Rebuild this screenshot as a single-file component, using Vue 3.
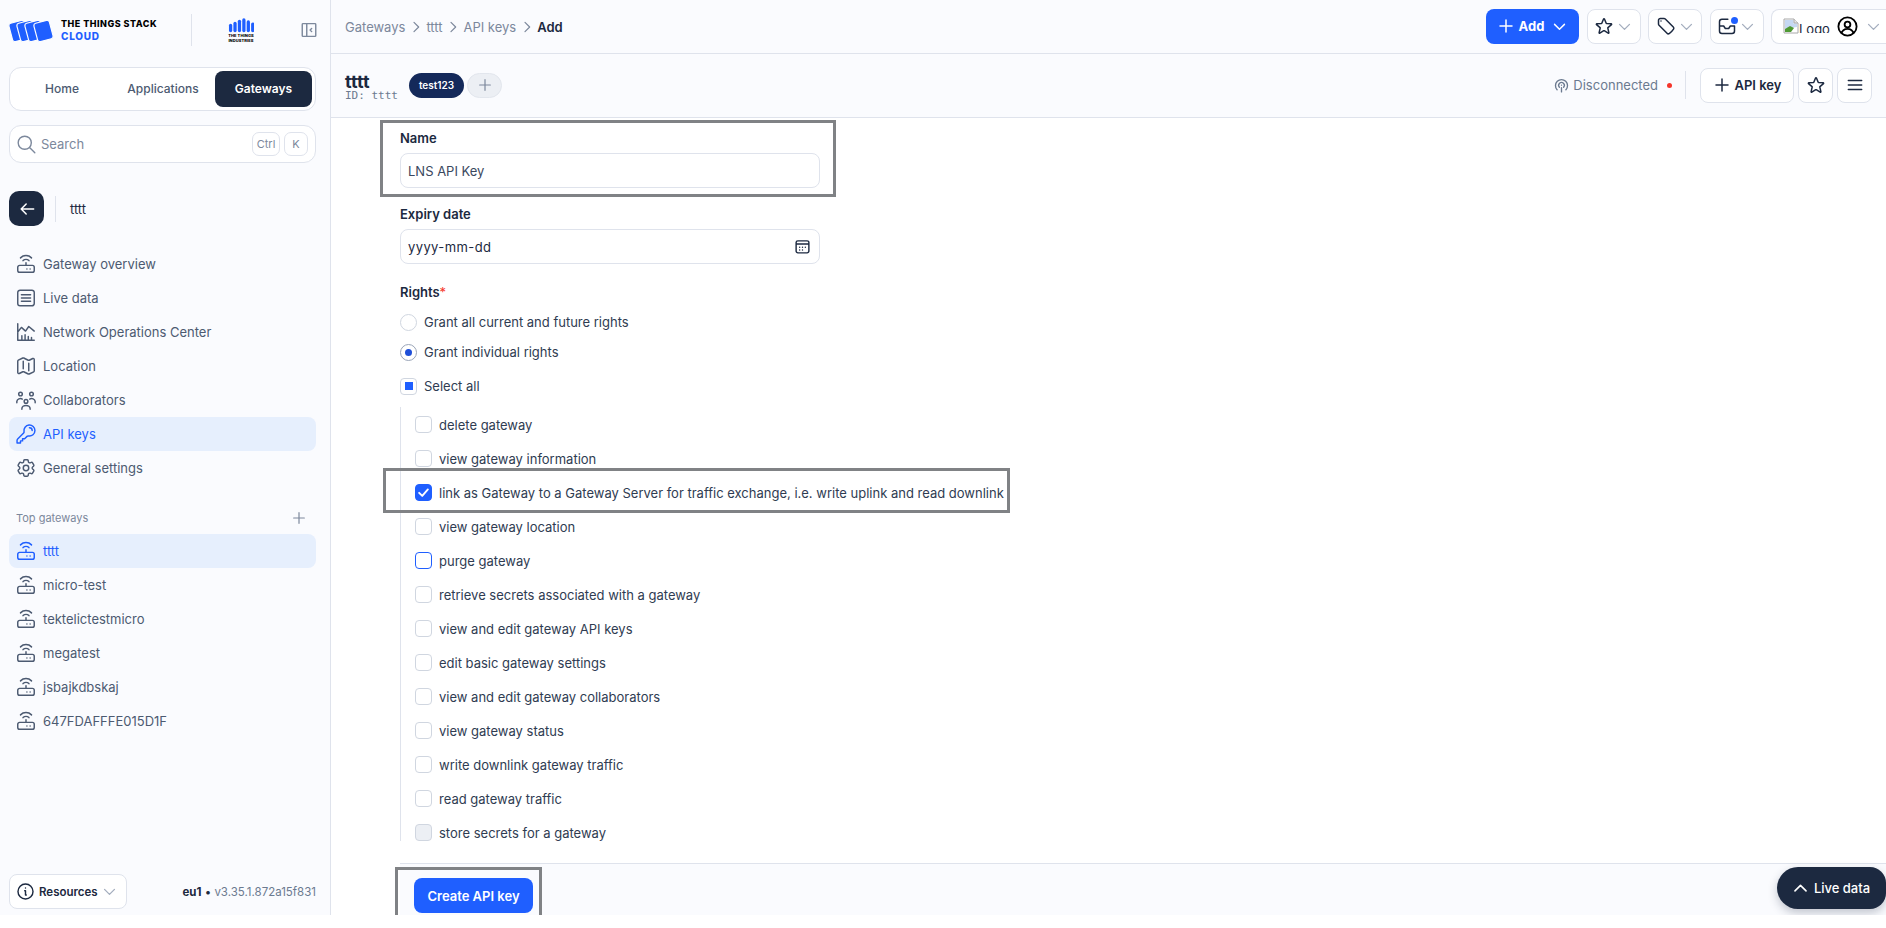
<script setup>
const icons = {
  router: 'M5 13.500h14a2 2 0 0 1 2 2v3.500a2 2 0 0 1-2 2H5a2 2 0 0 1-2-2v-3.500a2 2 0 0 1 2-2Z M12 13.500V10.500 M8.800 8.300a4.500 4.500 0 0 1 6.400 0 M6 5.300a8.500 8.500 0 0 1 12 0 M13 17.500h.01 M16.500 17.500h.01',
  live: 'M5.500 3.500h13a2.500 2.500 0 0 1 2.500 2.500v12a2.500 2.500 0 0 1-2.500 2.500h-13A2.500 2.500 0 0 1 3 18V6a2.500 2.500 0 0 1 2.500-2.500Z M7 8.500h10 M7 12h10 M7 15.500h10',
  noc: 'M3 3v18h18 M3 12l4-5 4.500 4 3.500-5 6 5 M7.500 21v-5 M11 21v-6 M14.500 21v-4 M18 21v-3',
  map: 'M9 6.750V15m6-6v8.250m.503 3.498 4.875-2.437c.381-.19.622-.58.622-1.006V4.820c0-.836-.88-1.380-1.628-1.006l-3.869 1.934c-.317.159-.69.159-1.006 0L9.503 3.252a1.125 1.125 0 0 0-1.006 0L3.622 5.689C3.240 5.880 3 6.270 3 6.695V19.180c0 .836.88 1.380 1.628 1.006l3.869-1.934c.317-.159.69-.159 1.006 0l4.994 2.497c.317.158.69.158 1.006 0Z',
  team: 'M12 11.500a2 2 0 1 0 0 4 2 2 0 0 0 0-4Z M7.500 22v-.5a4.500 3.500 0 0 1 9 0v.5 M6 3.500a2 2 0 1 0 0 4 2 2 0 0 0 0-4Z M18 3.500a2 2 0 1 0 0 4 2 2 0 0 0 0-4Z M2 15v-1.500a4 3.500 0 0 1 6-2.500 M22 15v-1.500a4 3.500 0 0 0-6-2.500',
  key: 'M15.750 5.250a3 3 0 0 1 3 3m3 0a6 6 0 0 1-7.029 5.912c-.563-.097-1.159.026-1.563.43L10.500 17.250H8.250v2.250H6v2.250H2.250v-2.818c0-.597.237-1.170.659-1.591l6.499-6.499c.404-.404.527-1 .43-1.563A6 6 0 1 1 21.750 8.250Z',
  cog: 'M9.594 3.940c.09-.542.56-.94 1.110-.94h2.593c.55 0 1.020.398 1.110.94l.213 1.281c.063.374.313.686.645.87.074.04.147.083.22.127.325.196.72.257 1.075.124l1.217-.456a1.125 1.125 0 0 1 1.370.49l1.296 2.247a1.125 1.125 0 0 1-.26 1.431l-1.003.827c-.293.241-.438.613-.43.992a7.723 7.723 0 0 1 0 .255c-.008.378.137.75.43.991l1.004.827c.424.35.534.955.26 1.430l-1.298 2.247a1.125 1.125 0 0 1-1.369.491l-1.217-.456c-.355-.133-.75-.072-1.076.124a6.470 6.470 0 0 1-.22.128c-.331.183-.581.495-.644.869l-.213 1.281c-.09.543-.56.94-1.110.94h-2.594c-.55 0-1.019-.398-1.110-.94l-.213-1.281c-.062-.374-.312-.686-.644-.87a6.520 6.520 0 0 1-.22-.127c-.325-.196-.72-.257-1.076-.124l-1.217.456a1.125 1.125 0 0 1-1.369-.49l-1.297-2.247a1.125 1.125 0 0 1 .26-1.431l1.004-.827c.292-.24.437-.613.43-.991a6.932 6.932 0 0 1 0-.255c.007-.38-.138-.751-.43-.992l-1.004-.827a1.125 1.125 0 0 1-.26-1.430l1.297-2.247a1.125 1.125 0 0 1 1.370-.491l1.216.456c.356.133.751.072 1.076-.124.072-.044.146-.086.22-.128.332-.183.582-.495.644-.869l.214-1.280Z M15 12a3 3 0 1 1-6 0 3 3 0 0 1 6 0Z',
  star: 'M11.480 3.499a.562.562 0 0 1 1.040 0l2.125 5.111a.563.563 0 0 0 .475.345l5.518.442c.499.04.701.663.321.988l-4.204 3.602a.563.563 0 0 0-.182.557l1.285 5.385a.562.562 0 0 1-.84.61l-4.725-2.885a.562.562 0 0 0-.586 0L6.982 20.540a.562.562 0 0 1-.84-.61l1.285-5.386a.562.562 0 0 0-.182-.557l-4.204-3.602a.562.562 0 0 1 .321-.988l5.518-.442a.563.563 0 0 0 .475-.345L11.480 3.500Z',
  tag: 'M9.568 3H5.250A2.250 2.250 0 0 0 3 5.250v4.318c0 .597.237 1.170.659 1.591l9.581 9.581c.699.699 1.780.872 2.607.33a18.095 18.095 0 0 0 5.223-5.223c.542-.827.369-1.908-.33-2.607L11.160 3.660A2.250 2.250 0 0 0 9.568 3Z M6 6h.008v.008H6V6Z',
  inbox: 'M13 4H6a3 3 0 0 0-3 3v11a3 3 0 0 0 3 3h12a3 3 0 0 0 3-3v-6 M3 12h5l2 3h4l2-3h5',
  chevDown: 'M5 9l7 7 7-7',
  chevUp: 'M5 15l7-7 7 7',
  chevRight: 'M9 5l7 7-7 7',
  plus: 'M12 4v16 M4 12h16',
  menu: 'M4 6.500h16 M4 12h16 M4 17.500h16',
  search: 'M21.500 21.500l-6-6 M17.500 10a7.500 7.500 0 1 1-15 0 7.500 7.500 0 0 1 15 0Z',
  arrow: 'M20 12H5 M11 6l-6 6 6 6',
  info: 'M12 2.500a9.500 9.500 0 1 0 0 19 9.500 9.500 0 0 0 0-19Z M11 11h1v5.500h1 M12 7.500h.01',
  user: 'M12 2.500a9.500 9.500 0 1 0 0 19 9.500 9.500 0 0 0 0-19Z M12 7a3 3 0 1 0 0 6 3 3 0 0 0 0-6Z M6 19a6 4.500 0 0 1 12 0',
  signal: 'M12 11.500h.01 M12 21v-6 M9 14.500a4 4 0 1 1 6 0 M5.800 18a8.500 8.500 0 1 1 12.400 0',
  panel: 'M4 3.500h16a1 1 0 0 1 1 1v15a1 1 0 0 1-1 1H4a1 1 0 0 1-1-1v-15a1 1 0 0 1 1-1Z M9 3.500v17 M15.500 10l-2 2 2 2',
  cal: 'M5.500 4h13A2.500 2.500 0 0 1 21 6.500v12a2.500 2.500 0 0 1-2.500 2.500h-13A2.500 2.500 0 0 1 3 18.500v-12A2.500 2.500 0 0 1 5.500 4Z M3 8.500h18 M8 13h.01 M12 13h.01 M16 13h.01 M8 17h.01 M12 17h.01'
}

const navItems = [
  { label: 'Gateway overview', icon: 'router' },
  { label: 'Live data', icon: 'live' },
  { label: 'Network Operations Center', icon: 'noc' },
  { label: 'Location', icon: 'map' },
  { label: 'Collaborators', icon: 'team' },
  { label: 'API keys', icon: 'key', active: true },
  { label: 'General settings', icon: 'cog' }
]
const gateways = [
  { label: 'tttt', active: true },
  { label: 'micro-test' },
  { label: 'tektelictestmicro' },
  { label: 'megatest' },
  { label: 'jsbajkdbskaj' },
  { label: '647FDAFFFE015D1F' }
]
const crumbs = ['Gateways', 'tttt', 'API keys']
const rights = [
  { label: 'delete gateway' },
  { label: 'view gateway information' },
  { label: 'link as Gateway to a Gateway Server for traffic exchange, i.e. write uplink and read downlink', state: 'checked' },
  { label: 'view gateway location' },
  { label: 'purge gateway', state: 'focus' },
  { label: 'retrieve secrets associated with a gateway' },
  { label: 'view and edit gateway API keys' },
  { label: 'edit basic gateway settings' },
  { label: 'view and edit gateway collaborators' },
  { label: 'view gateway status' },
  { label: 'write downlink gateway traffic' },
  { label: 'read gateway traffic' },
  { label: 'store secrets for a gateway', state: 'disabled' }
]
const logoBars = [
  { x: 0, y: 8, h: 12 }, { x: 5, y: 5, h: 15 }, { x: 10, y: 2, h: 18 },
  { x: 15, y: 0, h: 20 }, { x: 20, y: 3, h: 17 }, { x: 25, y: 6, h: 14 }
]
</script>

<template>
  <div class="app">
    <aside class="side">
      <div class="brand">
        <svg class="logo" viewBox="0 0 46 24" width="46" height="24">
          <g v-for="x in [0, 8, 16, 25]" :key="x" :transform="`translate(${x} 0) rotate(-15 9.500 12)`">
            <rect x="1.500" y="2.500" width="16" height="19" rx="2.500" fill="#1f5fff" stroke="#fbfcfe" stroke-width="1.200" />
          </g>
        </svg>
        <div class="brand-text">
          <div class="brand-top">THE THINGS STACK</div>
          <div class="brand-sub">CLOUD</div>
        </div>
        <span class="brand-div"></span>
        <div class="tti">
          <svg viewBox="0 0 27 15" width="26" height="15">
            <rect v-for="b in logoBars" :key="b.x" :x="b.x * 0.92 + 1" :y="b.y * 0.72" width="3.400" :height="b.h * 0.72" rx="1.700" fill="#1f5fff" />
          </svg>
          <div class="tti-text">THE THINGS<br />INDUSTRIES</div>
        </div>
        <svg class="ic panel" viewBox="0 0 24 24"><path :d="icons.panel" /></svg>
      </div>

      <div class="tabs">
        <span class="tab">Home</span>
        <span class="tab">Applications</span>
        <span class="tab on">Gateways</span>
      </div>

      <div class="search">
        <svg class="ic search-ic" viewBox="0 0 24 24"><path :d="icons.search" /></svg>
        <span class="search-text">Search</span>
        <span class="kbd">Ctrl</span>
        <span class="kbd k">K</span>
      </div>

      <div class="back">
        <span class="back-btn"><svg class="ic arrow-ic" viewBox="0 0 24 24"><path :d="icons.arrow" /></svg></span>
        <span class="back-div"></span>
        <span class="back-name">tttt</span>
      </div>

      <nav class="nav">
        <a v-for="n in navItems" :key="n.label" class="item" :class="{ on: n.active }">
          <svg class="ic nav-ic" viewBox="0 0 24 24"><path :d="icons[n.icon]" /></svg>
          <span>{{ n.label }}</span>
        </a>
      </nav>

      <div class="section">
        <span>Top gateways</span>
        <svg class="ic plus-sm" viewBox="0 0 24 24"><path :d="icons.plus" /></svg>
      </div>
      <nav class="nav list">
        <a v-for="g in gateways" :key="g.label" class="item" :class="{ on: g.active }">
          <svg class="ic nav-ic" viewBox="0 0 24 24"><path :d="icons.router" /></svg>
          <span>{{ g.label }}</span>
        </a>
      </nav>

      <div class="side-foot">
        <span class="res">
          <svg class="ic info-ic" viewBox="0 0 24 24"><path :d="icons.info" /></svg>
          <span class="res-label">Resources</span>
          <svg class="ic chev" viewBox="0 0 24 24"><path :d="icons.chevDown" /></svg>
        </span>
        <span class="ver"><b>eu1</b> <i>•</i> v3.35.1.872a15f831</span>
      </div>
    </aside>

    <main class="main">
      <header class="top">
        <div class="crumbs">
          <template v-for="c in crumbs" :key="c">
            <span>{{ c }}</span>
            <svg class="ic crumb-ic" viewBox="0 0 24 24"><path :d="icons.chevRight" /></svg>
          </template>
          <strong>Add</strong>
        </div>
        <div class="top-actions">
          <button class="add">
            <svg class="ic plus-md white" viewBox="0 0 24 24"><path :d="icons.plus" /></svg>
            <span>Add</span>
            <svg class="ic chev white" viewBox="0 0 24 24"><path :d="icons.chevDown" /></svg>
          </button>
          <button class="tb"><svg class="ic tool-ic" viewBox="0 0 24 24"><path :d="icons.star" /></svg><svg class="ic chev" viewBox="0 0 24 24"><path :d="icons.chevDown" /></svg></button>
          <button class="tb"><svg class="ic tool-ic" viewBox="0 0 24 24"><path :d="icons.tag" /></svg><svg class="ic chev" viewBox="0 0 24 24"><path :d="icons.chevDown" /></svg></button>
          <button class="tb inbox">
            <svg class="ic tool-ic" viewBox="0 0 24 24"><path :d="icons.inbox" /></svg>
            <span class="dot"></span>
            <svg class="ic chev" viewBox="0 0 24 24"><path :d="icons.chevDown" /></svg>
          </button>
          <button class="tb profile">
            <svg class="broken" viewBox="0 0 16 16" width="16" height="16">
              <path d="M1 1h10l4 4v10H1Z" fill="#fff" stroke="#a8a8a8" />
              <path d="M2 2h8.500v3.500H14V9L2 11Z" fill="#c5d8f2" />
              <path d="M2 14V11l5-3 4 2-3 4Z" fill="#4f9a34" />
              <path d="M11 1v4h4" fill="#e8e8e8" stroke="#a8a8a8" />
            </svg>
            <span class="logo-alt">Logo</span>
            <svg class="ic user-ic" viewBox="0 0 24 24"><path :d="icons.user" /></svg>
            <svg class="ic chev" viewBox="0 0 24 24"><path :d="icons.chevDown" /></svg>
          </button>
        </div>
      </header>

      <section class="sub">
        <div class="ttl">
          <div class="ttl-name">tttt</div>
          <div class="ttl-id">ID: tttt</div>
        </div>
        <span class="chip">test123</span>
        <span class="chip-add"><svg class="ic plus-sm" viewBox="0 0 24 24"><path :d="icons.plus" /></svg></span>
        <div class="sub-right">
          <svg class="ic signal-ic" viewBox="0 0 24 24"><path :d="icons.signal" /></svg>
          <span class="disc">Disconnected</span>
          <span class="red"></span>
          <span class="vdiv"></span>
          <button class="sb apikey"><svg class="ic plus-md" viewBox="0 0 24 24"><path :d="icons.plus" /></svg><span>API key</span></button>
          <button class="sb sq"><svg class="ic tool-ic" viewBox="0 0 24 24"><path :d="icons.star" /></svg></button>
          <button class="sb sq"><svg class="ic tool-ic" viewBox="0 0 24 24"><path :d="icons.menu" /></svg></button>
        </div>
      </section>

      <form class="form" @submit.prevent>
        <div class="field name">
          <div class="lab">Name</div>
          <div class="input">LNS API Key</div>
        </div>
        <div class="field expiry">
          <div class="lab">Expiry date</div>
          <div class="input date">
            <span>yyyy-mm-dd</span>
            <svg class="ic cal-ic" viewBox="0 0 24 24"><path :d="icons.cal" /></svg>
          </div>
        </div>
        <div class="field grant">
          <div class="lab">Rights<em>*</em></div>
          <div class="radios">
            <div class="opt"><span class="radio"></span>Grant all current and future rights</div>
            <div class="opt"><span class="radio sel"></span>Grant individual rights</div>
          </div>
          <div class="opt all"><span class="box ind"></span>Select all</div>
          <div class="rights">
            <div v-for="r in rights" :key="r.label" class="opt sm">
              <span class="box" :class="r.state">
                <svg v-if="r.state === 'checked'" viewBox="0 0 24 24" width="15" height="15"><path d="M5 12.500l5 5L19 7" fill="none" stroke="#fff" stroke-width="3" stroke-linecap="round" stroke-linejoin="round" /></svg>
              </span>
              {{ r.label }}
            </div>
          </div>
        </div>
      </form>

      <footer class="foot">
        <button class="create">Create API key</button>
      </footer>

      <button class="live">
        <svg class="ic chev-lg white" viewBox="0 0 24 24"><path :d="icons.chevUp" /></svg>
        <span>Live data</span>
      </button>
    </main>

    <span class="mark m1"></span>
    <span class="mark m2"></span>
    <span class="mark m3"></span>
  </div>
</template>

<style scoped>
.app {
  display: flex;
  height: 915px;
  width: 1886px;
  position: relative;
  font-family: Inter, "Liberation Sans", sans-serif;
  font-size: 13px;
  color: #1c2940;
  line-height: 20px;
}
.ic { fill: none; stroke: #4c5a71; stroke-width: 1.600; stroke-linecap: round; stroke-linejoin: round; flex: none; }
.nav-ic { width: 22px; height: 22px; }
.search-ic { width: 21px; height: 21px; stroke: #7c889c; }
.arrow-ic { width: 20px; height: 20px; stroke: #fff; stroke-width: 1.800; }
.plus-sm { width: 16px; height: 16px; stroke: #7c889c; stroke-width: 1.800; }
.plus-md { width: 18px; height: 18px; stroke: #1c2940; stroke-width: 2; }
.info-ic { width: 19px; height: 19px; stroke: #1c2940; stroke-width: 1.800; }
.chev { width: 17px; height: 17px; stroke: #a3adbd; stroke-width: 1.800; }
.chev-lg { width: 19px; height: 19px; stroke-width: 2; }
.crumb-ic { width: 16px; height: 16px; stroke: #7c889c; stroke-width: 1.800; }
.tool-ic { width: 20px; height: 20px; stroke: #1c2940; stroke-width: 1.800; }
.user-ic { width: 23px; height: 23px; stroke: #000; stroke-width: 1.900; }
.signal-ic { width: 17px; height: 17px; stroke: #6b7a90; stroke-width: 1.900; }
.cal-ic { width: 17px; height: 17px; stroke: #1c2940; stroke-width: 2; }
.white { stroke: #fff; stroke-width: 2; }

.side {
  width: 331px;
  box-sizing: border-box;
  flex: none;
  background: #fafbfe;
  border-right: 1px solid #dfe3ec;
  padding: 0 14px 6px 9px;
  display: flex;
  flex-direction: column;
}
.brand { height: 60px; display: flex; align-items: center; position: relative; flex: none; }
.logo { flex: none; margin-right: 6px; margin-top: 1px; overflow: visible; }
.brand-text { width: 130px; margin-top: -1px; }
.brand-top { font-size: 9px; line-height: 12px; font-weight: 800; letter-spacing: .48px; color: #000; white-space: nowrap; }
.brand-sub { font-size: 10px; line-height: 12px; font-weight: 800; letter-spacing: .75px; color: #1f5fff; }
.brand-div { width: 1px; height: 32px; background: #dfe3ec; flex: none; }
.tti { width: 26px; margin-left: 36px; flex: none; display: flex; flex-direction: column; align-items: center; }
.tti svg { display: block; }
.tti-text { font-size: 4px; line-height: 5px; font-weight: 800; color: #000; text-align: center; white-space: nowrap; letter-spacing: .1px; }
.panel { width: 18px; height: 18px; margin-left: auto; margin-right: -2px; stroke: #7c889c; stroke-width: 1.900; }

.tabs {
  margin-top: 7px;
  height: 44px;
  box-sizing: border-box;
  border: 1px solid #dfe3ec;
  border-radius: 12px;
  background: #fff;
  padding: 3px;
  display: grid;
  grid-template-columns: 98px 1fr 97px;
  flex: none;
}
.tab { display: flex; align-items: center; justify-content: center; font-size: 12px; font-weight: 500; color: #4c5a71; border-radius: 8px; }
.tab.on { background: #1c2940; color: #fff; font-weight: 600; }

.search {
  margin-top: 14px;
  height: 38px;
  box-sizing: border-box;
  border: 1px solid #dfe3ec;
  border-radius: 12px;
  background: #fff;
  display: flex;
  align-items: center;
  padding: 0 7px 0 6px;
  flex: none;
}
.search-text { margin-left: 4px; color: #7c889c; flex: 1; }
.kbd { font-size: 11px; color: #7c889c; height: 24px; width: 28px; justify-content: center; box-sizing: border-box; border: 1px solid #dfe3ec; border-radius: 7px; display: flex; align-items: center; background: #fff; }
.k { margin-left: 4px; width: 24px; }

.back { margin-top: 28px; height: 35px; display: flex; align-items: center; flex: none; }
.back-btn { width: 35px; height: 35px; border-radius: 10px; background: #1c2940; display: flex; align-items: center; justify-content: center; }
.back-div { width: 1px; height: 26px; background: #dfe3ec; margin: 0 14px 0 11px; }

.nav { margin-top: 21px; display: flex; flex-direction: column; flex: none; }
.item { height: 34px; border-radius: 8px; display: flex; align-items: center; gap: 6px; padding-left: 6px; color: #4c5a71; }
.item.on { background: #e6effd; color: #1f5fff; }
.item.on .ic { stroke: #1f5fff; }

.section { margin-top: 21px; margin-bottom: 4px; height: 24px; display: flex; align-items: center; justify-content: space-between; padding: 0 9px 0 7px; font-size: 11px; color: #7c889c; flex: none; }
.list { margin-top: 0; }

.side-foot { margin-top: auto; display: flex; align-items: center; justify-content: space-between; flex: none; }
.res { width: 118px; height: 35px; box-sizing: border-box; border: 1px solid #dfe3ec; border-radius: 8px; background: #fff; display: flex; align-items: center; padding: 0 0 0 6px; }
.res-label { margin: 0 5px 0 4px; font-size: 11.500px; font-weight: 600; width: 57px; }
.ver { font-size: 11.500px; color: #6b7a90; white-space: nowrap; }
.ver b { font-weight: 700; color: #1c2940; }
.ver i { font-style: normal; color: #1c2940; }

.main { flex: 1; min-width: 0; display: flex; flex-direction: column; background: #fff; position: relative; }
.top { height: 54px; box-sizing: border-box; flex: none; background: #fafbfe; border-bottom: 1px solid #dfe3ec; display: flex; align-items: center; padding: 0 0 0 14px; }
.crumbs { display: flex; align-items: center; gap: 2.500px; color: #7c889c; margin-top: 1px; }
.crumbs strong { font-weight: 600; color: #1c2940; }
.top-actions { margin-left: auto; display: flex; gap: 7.500px; margin-bottom: 1px; overflow: hidden; }
button { font-family: inherit; font-size: 13px; cursor: default; }
.add { width: 93px; height: 35px; border: 0; border-radius: 8px; background: #1f5fff; color: #fff; font-weight: 700; display: flex; align-items: center; justify-content: center; padding: 0; gap: 4px; }
.add span { margin-right: 3px; }
.tb { width: 54px; height: 35px; box-sizing: border-box; border: 1px solid #dfe3ec; border-radius: 8px; background: #fff; display: flex; align-items: center; justify-content: center; gap: 2px; padding: 0; position: relative; }
.dot { position: absolute; left: 20px; top: 7px; width: 7px; height: 7px; border-radius: 50%; background: #1f5fff; }
.profile { width: 115px; flex: none; justify-content: flex-start; padding-left: 11px; border-radius: 8px 0 0 8px; border-right: 0; gap: 0; }
.broken { flex: none; }
.logo-alt { font-size: 13px; line-height: 16px; height: 12px; margin-top: 2px; overflow: hidden; color: #1c2940; margin-right: 6px; width: 31px; text-align: left; }
.profile .chev { margin-left: 6px; }

.sub { height: 64px; box-sizing: border-box; flex: none; background: #fafbfe; border-bottom: 1px solid #dfe3ec; display: flex; align-items: center; padding: 0 14px; }
.ttl { width: 64px; flex: none; margin-top: 2px; }
.ttl-name { font-size: 18px; line-height: 17px; font-weight: 700; }
.ttl-id { font-family: "DejaVu Sans Mono", "Liberation Mono", monospace; font-size: 11px; line-height: 11px; color: #6b7a90; white-space: nowrap; }
.chip { width: 55px; height: 25px; margin-top: -1px; border-radius: 13px; background: #14295a; color: #fff; font-size: 10px; font-weight: 600; display: flex; align-items: center; justify-content: center; }
.chip-add { width: 35px; height: 25px; box-sizing: border-box; margin: -1px 0 0 3px; border-radius: 13px; background: #eceff4; border: 1px solid #e2e6ed; display: flex; align-items: center; justify-content: center; }
.sub-right { margin-left: auto; display: flex; align-items: center; margin-bottom: 1px; }
.disc { margin-left: 3px; color: #6b7a90; }
.red { width: 5px; height: 5px; border-radius: 50%; background: #f5352b; margin-left: 9px; }
.vdiv { width: 1px; height: 28px; background: #dfe3ec; margin: 0 14px 0 13px; }
.sb { height: 35px; box-sizing: border-box; border: 1px solid #dfe3ec; border-radius: 8px; background: #fff; display: flex; align-items: center; justify-content: center; padding: 0; color: #1c2940; font-weight: 600; margin-left: 4px; }
.apikey { width: 94px; gap: 4px; margin-left: 0; }
.sq { width: 35px; }

.form { flex: none; padding: 10px 0 0 69px; }
.expiry { margin-top: 16px; }
.grant { margin-top: 18px; }
.lab { font-weight: 600; margin-bottom: 5px; line-height: 20px; }
.lab em { font-style: normal; color: #f5352b; font-weight: 400; }
.input { width: 420px; height: 35px; box-sizing: border-box; border: 1px solid #dfe3ec; border-radius: 8px; background: #fff; display: flex; align-items: center; padding: 0 7px; color: #3b485e; }
.date { justify-content: space-between; color: #1c2940; padding-right: 8px; letter-spacing: .4px; }
.opt { display: flex; align-items: center; gap: 7px; height: 30px; color: #2f3c52; white-space: nowrap; }
.radio, .box { width: 17px; height: 17px; box-sizing: border-box; border: 1px solid #d0d6e0; background: #fff; flex: none; display: flex; align-items: center; justify-content: center; }
.radio { border-radius: 50%; }
.radio.sel::after { content: ""; width: 7px; height: 7px; border-radius: 50%; background: #1f4fd8; }
.radio.sel { border-color: #9aa5b8; }
.box { border-radius: 4px; }
.all { margin-top: 4px; }
.box.ind::after { content: ""; width: 8px; height: 8px; background: #1f5fff; }
.rights { margin-top: 6px; border-left: 1px solid #dfe3ec; padding: 9px 0 0 14px; display: flex; flex-direction: column; gap: 17px; width: max-content; }
.sm { height: 17px; }
.box.checked { background: #1f5fff; border-color: #1f5fff; }
.box.focus { border-color: #1f5fff; }
.box.disabled { background: #eceff4; }

.foot { margin: 22px 0 0 69px; flex: 1; background: #fafbfe; border-top: 1px solid #dfe3ec; padding: 14px 14px 0; }
.create { width: 119px; height: 35px; border: 0; border-radius: 8px; background: #1f5fff; color: #fff; font-weight: 600; display: block; padding: 0; }

.live { position: absolute; right: 0; top: 867px; width: 109px; height: 42px; border: 0; border-radius: 21px 16px 16px 21px; background: #1c2940; color: #fff; font-weight: 500; display: flex; align-items: center; justify-content: center; gap: 4px; padding: 0 2px 0 0; box-shadow: 0 4px 10px rgba(28, 41, 64, .25); }

.mark { position: absolute; box-sizing: border-box; border: 3px solid #808285; pointer-events: none; }
.m1 { left: 380px; top: 120px; width: 456px; height: 77px; }
.m2 { left: 383px; top: 468px; width: 627px; height: 45px; }
.m3 { left: 395px; top: 867px; width: 147px; height: 61px; }
</style>
